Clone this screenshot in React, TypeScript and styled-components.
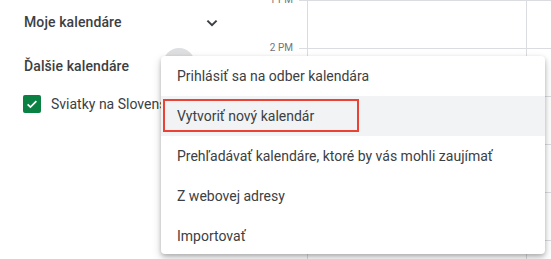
import React from "react";
import styled, { createGlobalStyle } from "styled-components";

const Global = createGlobalStyle`
  html, body { margin: 0; padding: 0; background: #fff; }
  body { font-family: Roboto, "Noto Sans", Arial, sans-serif; }
  * { box-sizing: border-box; }
`;

const Page = styled.div`
  position: relative;
  width: 551px;
  height: 259px;
  overflow: hidden;
  display: flex;
  background: #fff;
`;

const Sidebar = styled.div`
  width: 256px;
  flex: none;
  display: flex;
  flex-direction: column;
`;

const SectionHeader = styled.div`
  position: relative;
  height: 44px;
  display: flex;
  align-items: center;
  padding-left: 24px;
  padding-right: 32px;
  font-size: 14px;
  font-weight: 500;
  color: #3c4043;
  letter-spacing: 0.1px;
`;

const HeaderTitle = styled.span`
  flex: 1;
`;

const Chevron = styled.svg`
  width: 24px;
  height: 24px;
  margin-top: 2px;
`;

const HoverCircle = styled.div`
  position: absolute;
  left: 163px;
  top: 4px;
  width: 32px;
  height: 32px;
  border-radius: 50%;
  background: #dedfe1;
`;

const CalRow = styled.div`
  height: 32px;
  display: flex;
  align-items: center;
  padding-left: 23px;
  gap: 10px;
  font-size: 14px;
  color: #3c4043;
  white-space: nowrap;
`;

const Check = styled.div`
  width: 18px;
  height: 18px;
  border-radius: 2px;
  background: #0b8043;
  display: flex;
  align-items: center;
  justify-content: center;
  flex: none;
`;

const Grid = styled.div`
  flex: 1;
  display: flex;
  flex-direction: column;
`;

const HourRow = styled.div`
  height: 48px;
  flex: none;
  display: flex;
`;

const Label = styled.div`
  width: 43px;
  flex: none;
  text-align: right;
  padding-right: 6px;
  font-size: 10px;
  line-height: 12px;
  color: #70757a;
  margin-top: -6px;
  height: 12px;
`;

const Tick = styled.div`
  width: 8px;
  flex: none;
  border-top: 1px solid #dadce0;
`;

const DayCol = styled.div<{ $w?: number }>`
  width: ${(p) => (p.$w ? `${p.$w}px` : "auto")};
  flex: ${(p) => (p.$w ? "none" : "1")};
  border-top: 1px solid #dadce0;
  border-left: 1px solid #dadce0;
`;

const Menu = styled.div`
  position: absolute;
  left: 161px;
  top: 56px;
  width: 384px;
  height: 198px;
  overflow: hidden;
  background: #fff;
  border-radius: 4px;
  box-shadow: 0 2px 4px rgba(0, 0, 0, 0.2), 0 4px 10px rgba(0, 0, 0, 0.18);
  display: flex;
  flex-direction: column;
`;

const Item = styled.div<{ $active?: boolean }>`
  position: relative;
  height: 40px;
  flex: none;
  display: flex;
  align-items: center;
  padding-left: 16px;
  font-size: 14px;
  color: #3c4043;
  background: ${(p) => (p.$active ? "#f1f3f4" : "transparent")};
  white-space: nowrap;
`;

const Highlight = styled.div`
  position: absolute;
  left: 2px;
  top: 3px;
  width: 196px;
  height: 33px;
  border: 2px solid #ea4335;
`;

const hours = ["1 PM", "2 PM", "", "", "", ""];

const items = [
  "Prihlásiť sa na odber kalendára",
  "Vytvoriť nový kalendár",
  "Prehľadávať kalendáre, ktoré by vás mohli zaujímať",
  "Z webovej adresy",
  "Importovať",
];

export default function App() {
  return (
    <>
      <Global />
      <Page>
        <Sidebar>
          <SectionHeader>
            <HeaderTitle>Moje kalendáre</HeaderTitle>
            <Chevron viewBox="0 0 24 24">
              <path d="M7.4 9.6 12 14.2l4.6-4.6" fill="none" stroke="#3c4043" strokeWidth="2" />
            </Chevron>
          </SectionHeader>
          <SectionHeader>
            <HeaderTitle>Ďalšie kalendáre</HeaderTitle>
            <HoverCircle />
          </SectionHeader>
          <CalRow>
            <Check>
              <svg width="14" height="14" viewBox="0 0 24 24">
                <path d="M4.5 12.5l4.8 4.8L19.5 7" fill="none" stroke="#fff" strokeWidth="3" />
              </svg>
            </Check>
            Sviatky na Slovensku
          </CalRow>
        </Sidebar>
        <Grid>
          {hours.map((h, i) => (
            <HourRow key={i}>
              <Label>{h}</Label>
              <Tick />
              <DayCol $w={219} />
              <DayCol />
            </HourRow>
          ))}
        </Grid>
        <Menu>
          {items.map((t, i) => (
            <Item key={t} $active={i === 1}>
              {t}
              {i === 1 && <Highlight />}
            </Item>
          ))}
        </Menu>
      </Page>
    </>
  );
}
